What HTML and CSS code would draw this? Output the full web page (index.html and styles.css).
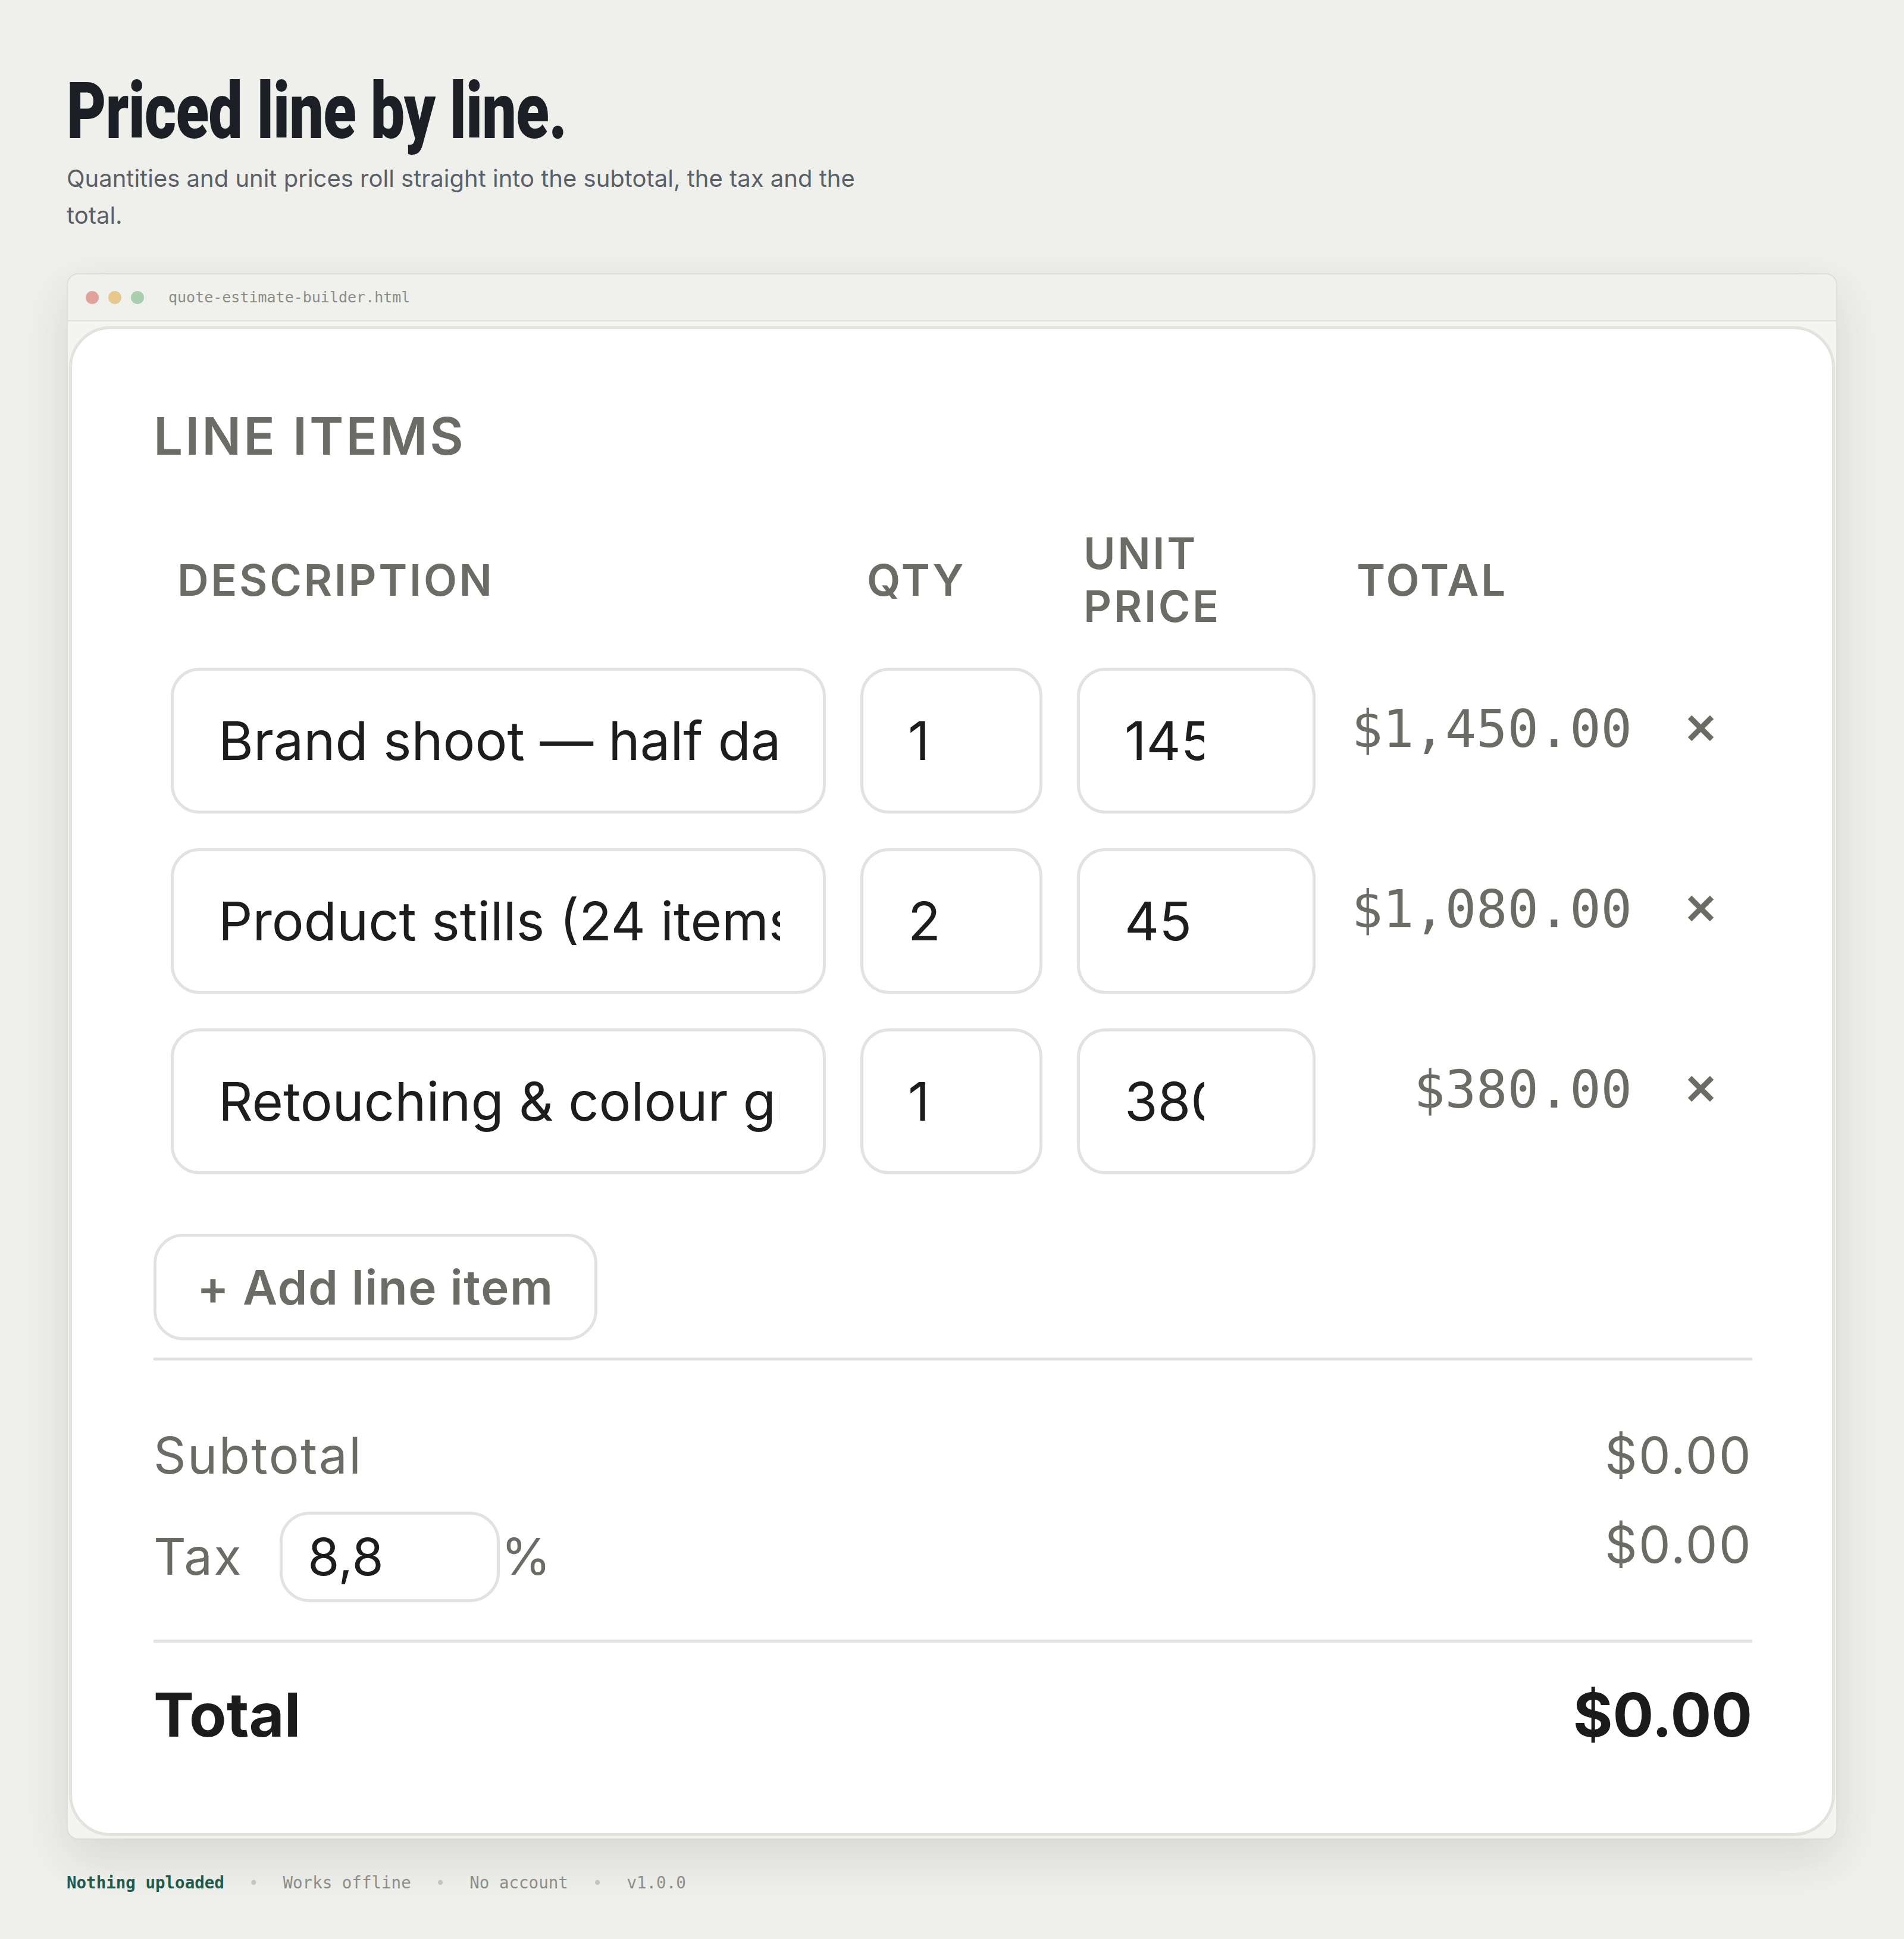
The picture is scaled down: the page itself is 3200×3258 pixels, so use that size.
FILE: index.html
```html
<!DOCTYPE html>
<html lang="en">
<head>
    <meta charset="UTF-8">
    <meta name="viewport" content="width=device-width, initial-scale=1.0">
    <title>Quote estimate builder</title>
    <link rel="stylesheet" href="styles.css">
</head>
<body>
<main class="page">
    <h1 class="page-title">Priced line by line.</h1>
    <p class="page-lede">Quantities and unit prices roll straight into the subtotal, the tax and the total.</p>

    <div class="frame">
        <div class="frame-bar">
            <span class="dot dot-red"></span>
            <span class="dot dot-yellow"></span>
            <span class="dot dot-green"></span>
            <span class="frame-name">quote-estimate-builder.html</span>
        </div>
        <div class="frame-body">
            <section class="card">
                <h2 class="card-title">LINE ITEMS</h2>

                <div class="items">
                    <div class="item-row item-head">
                        <div class="cell">DESCRIPTION</div>
                        <div class="cell">QTY</div>
                        <div class="cell">UNIT<br>PRICE</div>
                        <div class="cell">TOTAL</div>
                        <div class="cell"></div>
                    </div>

                    <div class="item-row">
                        <div class="cell"><input class="field field-desc" type="text" value="Brand shoot — half day"></div>
                        <div class="cell"><input class="field" type="text" inputmode="decimal" value="1"></div>
                        <div class="cell"><input class="field field-price" type="text" inputmode="decimal" value="1450"></div>
                        <div class="cell line-total">$1,450.00</div>
                        <div class="cell"><button class="remove" aria-label="Remove line"><svg viewBox="0 0 47 43" width="47" height="43"><path d="M5 3 L42 40 M42 3 L5 40" /></svg></button></div>
                    </div>

                    <div class="item-row">
                        <div class="cell"><input class="field field-desc" type="text" value="Product stills (24 items)"></div>
                        <div class="cell"><input class="field" type="text" inputmode="decimal" value="2"></div>
                        <div class="cell"><input class="field field-price" type="text" inputmode="decimal" value="45"></div>
                        <div class="cell line-total">$1,080.00</div>
                        <div class="cell"><button class="remove" aria-label="Remove line"><svg viewBox="0 0 47 43" width="47" height="43"><path d="M5 3 L42 40 M42 3 L5 40" /></svg></button></div>
                    </div>

                    <div class="item-row">
                        <div class="cell"><input class="field field-desc" type="text" value="Retouching &amp; colour grade"></div>
                        <div class="cell"><input class="field" type="text" inputmode="decimal" value="1"></div>
                        <div class="cell"><input class="field field-price" type="text" inputmode="decimal" value="380"></div>
                        <div class="cell line-total">$380.00</div>
                        <div class="cell"><button class="remove" aria-label="Remove line"><svg viewBox="0 0 47 43" width="47" height="43"><path d="M5 3 L42 40 M42 3 L5 40" /></svg></button></div>
                    </div>
                </div>

                <button class="add-line">+ Add line item</button>

                <hr class="rule">

                <div class="summary">
                    <div class="summary-row">
                        <span>Subtotal</span>
                        <span>$0.00</span>
                    </div>
                    <div class="summary-row tax-row">
                        <div class="tax-field">
                            <span class="tax-label">Tax</span>
                            <input class="tax-input" type="text" inputmode="decimal" value="8,8">
                            <span>%</span>
                        </div>
                        <span>$0.00</span>
                    </div>
                </div>

                <hr class="rule rule-total">

                <div class="summary-row grand-total">
                    <span>Total</span>
                    <span>$0.00</span>
                </div>
            </section>
        </div>
    </div>

    <footer class="page-foot">
        <span class="foot-strong">Nothing uploaded</span>
        <span class="sep">•</span>
        <span>Works offline</span>
        <span class="sep">•</span>
        <span>No account</span>
        <span class="sep">•</span>
        <span>v1.0.0</span>
    </footer>
</main>
</body>
</html>
```

FILE: styles.css
```css
/* page */
html {
    background: #eff0ec;
}

body {
    margin: 0;
    font-family: Inter, "Liberation Sans", sans-serif;
    color: #1c1d1b;
}

.page {
    padding: 122px 112px 0;
}

/* no condensed face installed, so the bold face is narrowed */
.page-title {
    margin: 0;
    font-family: Roboto, "Liberation Sans", sans-serif;
    font-weight: 900;
    font-size: 131px;
    line-height: 130px;
    letter-spacing: -1px;
    color: #1c2026;
    transform: scaleX(0.78);
    transform-origin: left top;
}

.page-lede {
    margin: 17px 0 0;
    max-width: 1380px;
    font-size: 40px;
    line-height: 62px;
    color: #5a6068;
}

/* browser window around the tool */
.frame {
    margin-top: 66px;
    border: 2px solid #dcddd7;
    border-radius: 20px;
    background: #f4f4f1;
    overflow: hidden;
    box-shadow: 0 30px 80px rgba(30, 40, 30, 0.12);
}

.frame-bar {
    display: flex;
    align-items: center;
    gap: 16px;
    height: 77px;
    padding-left: 30px;
    background: #f0f1ec;
    border-bottom: 2px solid #e0e1db;
}

.dot {
    width: 22px;
    height: 22px;
    border-radius: 50%;
}

.dot-red { background: #e0a39c; }
.dot-yellow { background: #e6c98c; }
.dot-green { background: #a9cfae; }

.frame-name {
    margin-left: 25px;
    font-family: "DejaVu Sans Mono", "Liberation Mono", monospace;
    font-size: 25px;
    color: #8b8d87;
}

.frame-body {
    padding: 8px 2px 4px;
}

/* the tool itself */
.card {
    background: #fff;
    border: 5px solid #e2e3dd;
    border-radius: 70px;
    padding: 127px 134px 132px 137px;
}

.card-title {
    margin: 0 0 70px;
    font-size: 87px;
    line-height: 106px;
    font-weight: 600;
    letter-spacing: 4px;
    color: #6b6c66;
}

.item-row {
    display: grid;
    grid-template-columns: 1fr 364px 459px 532px 173px;
    align-items: start;
    padding: 29px 0;
}

.cell {
    padding: 0 29px;
}

.item-head {
    align-items: center;
    padding: 29px 0 30px;
    font-size: 73px;
    line-height: 89px;
    font-weight: 600;
    letter-spacing: 3.6px;
    color: #6b6c66;
}

.item-head .cell {
    padding: 0 40px;
}

.field {
    display: block;
    box-sizing: border-box;
    width: 100%;
    height: 245px;
    padding: 0 72px 0 75px;
    border: 5px solid #e2e3de;
    border-radius: 48px;
    background: #fff;
    font-family: inherit;
    font-size: 90px;
    color: #1d1d1d;
    outline: none;
}

.field-price {
    padding-right: 182px;
}

.line-total {
    padding-top: 50px;
    text-align: right;
    font-family: "DejaVu Sans Mono", "Liberation Mono", monospace;
    font-size: 87px;
    line-height: 106px;
    color: #6b6c66;
}

.remove {
    display: block;
    margin: 80px auto 0;
    padding: 0;
    border: 0;
    background: none;
}

.remove svg {
    display: block;
    stroke: #6b6c66;
    stroke-width: 9;
    fill: none;
}

.add-line {
    display: block;
    margin-top: 71px;
    height: 179px;
    padding: 0 68px;
    border: 5px solid #e2e3de;
    border-radius: 50px;
    background: #fff;
    font-family: inherit;
    font-size: 80px;
    font-weight: 600;
    letter-spacing: 1.5px;
    color: #6b6c66;
}

.rule {
    margin: 29px 0 0;
    border: 0;
    border-top: 5px solid #e3e4df;
}

.rule-total {
    margin-top: 63px;
}

.summary {
    display: flex;
    flex-direction: column;
    gap: 38px;
    padding-top: 104px;
    font-size: 85px;
    line-height: 112px;
    letter-spacing: 2.5px;
    color: #6b6c66;
}

.summary-row {
    display: flex;
    justify-content: space-between;
}

.tax-row {
    align-items: flex-start;
}

.tax-field {
    display: flex;
    align-items: center;
}

.tax-label {
    margin-right: 62px;
}

.tax-input {
    box-sizing: border-box;
    width: 370px;
    height: 152px;
    margin-right: 2px;
    padding: 0 30px 0 42px;
    border: 5px solid #e2e3de;
    border-radius: 50px;
    background: #fff;
    font-family: inherit;
    font-size: 86px;
    letter-spacing: 0;
    color: #1d1d1d;
    outline: none;
}

.grand-total {
    padding-top: 54px;
    font-size: 102px;
    line-height: 134px;
    font-weight: 700;
    color: #1b1b1b;
}

/* footer notes */
.page-foot {
    display: flex;
    gap: 41px;
    margin-top: 52px;
    font-family: "DejaVu Sans Mono", "Liberation Mono", monospace;
    font-size: 27.5px;
    line-height: 41px;
    color: #8d8e89;
}

.foot-strong {
    font-weight: 700;
    color: #1e5b4c;
}

.sep {
    color: #c4c5bf;
}
```
